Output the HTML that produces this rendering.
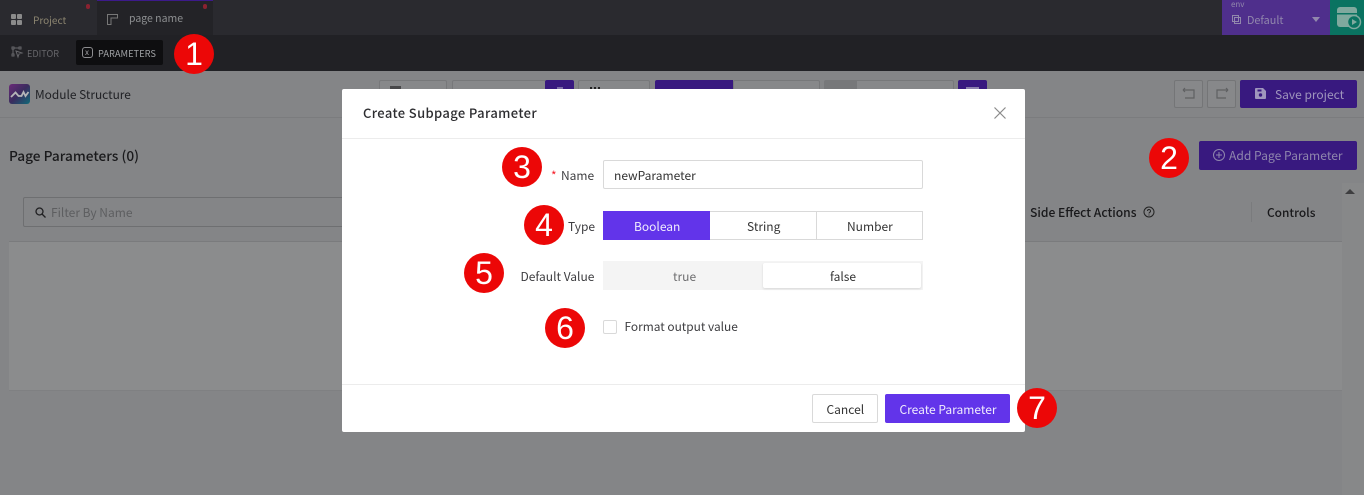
<!DOCTYPE html>
<html><head><meta charset="utf-8">
<style>
html,body{margin:0;padding:0}
body{width:1364px;height:495px;overflow:hidden;position:relative;background:#848587;font-family:"Noto Sans CJK SC","Liberation Sans",sans-serif;font-size:12px;color:#1e1e22}
.a{position:absolute;box-sizing:border-box}
.t{position:absolute;white-space:nowrap;line-height:16px}
.c{position:absolute;width:40px;height:40px;border-radius:50%;background:#ec0707;color:#fff;font:32px/40px "Liberation Sans",sans-serif;text-align:center}
.bx{position:absolute;box-sizing:border-box;border:1px solid #77787a;border-radius:2px;background:#87888a}
.p{position:absolute;background:#38197f;border-radius:2px}
svg{position:absolute;overflow:visible}
</style></head><body>
<div class="a" style="left:0;top:0;width:1364px;height:35px;background:#2a2a2f"></div>
<div class="a" style="left:97px;top:0;width:116px;height:35px;background:#232327;border-top:1px solid #3c1a8a"></div>
<div class="a" style="left:86px;top:4px;width:4px;height:5px;border-radius:2px;background:#8a2230"></div>
<div class="a" style="left:203px;top:4px;width:4px;height:5px;border-radius:2px;background:#8a2230"></div>
<svg style="left:11px;top:14px" width="11" height="11"><g fill="#8b8b8b"><rect width="5" height="5" rx="1"/><rect x="6" width="5" height="5" rx="1"/><rect y="6" width="5" height="5" rx="1"/><rect x="6" y="6" width="5" height="5" rx="1"/></g></svg>
<div class="t" style="left:33px;top:11.500px;font-size:10px;color:#8c8570">Project</div>
<svg style="left:107px;top:14px" width="12" height="11" fill="none" stroke="#777" stroke-width="1"><path d="M.5.5h10v3.5H4v6.500H.5z"/></svg>
<div class="t" style="left:129px;top:11px;font-size:10.5px;color:#8d8f91">page name</div>

<div class="a" style="left:1222px;top:0;width:108px;height:35px;background:#4f2f8c"></div>
<div class="t" style="left:1231px;top:-1px;font-size:8px;color:#9288ad;line-height:12px">env</div>
<svg style="left:1232px;top:15px" width="9" height="9" fill="none" stroke="#9288ad"><rect x=".5" y=".5" width="6" height="6"/><rect x="2.500" y="2.500" width="6" height="6"/></svg>
<div class="t" style="left:1247px;top:11.500px;font-size:10.8px;color:#9288ad">Default</div>
<div class="a" style="left:1312px;top:17px;width:0;height:0;border:4px solid transparent;border-top:5px solid #9288ad;border-bottom:0"></div>
<div class="a" style="left:1330px;top:0;width:34px;height:35px;background:#0a7361"></div>
<svg style="left:1337px;top:6px" width="24" height="23"><rect x="0" y="1" width="20" height="20" rx="3" fill="#7fa99e"/><rect x="0" y="7" width="20" height="1.500" fill="#0a7361"/><circle cx="17" cy="16" r="6.500" fill="#0a7361" stroke="#7fa99e" stroke-width="1.500"/><path d="M15 13l5 3-5 3z" fill="#7fa99e"/></svg>

<div class="a" style="left:0;top:35px;width:1364px;height:36px;background:#212125"></div>
<svg style="left:11px;top:46px" width="12" height="12" fill="none" stroke="#66666a"><path d="M1 1h2v2H1zM8 1h2v2H8zM1 8h2v2H1zM3 2h5M2 3v5M5 5l6 2-3 1-1 3z"/></svg>
<div class="t" style="left:27px;top:45px;font-size:9.100px;color:#66666a">EDITOR</div>
<div class="a" style="left:76px;top:40px;width:87px;height:25px;background:#0e0e10;border-radius:2px"></div>
<div class="a" style="left:82px;top:47px;width:11px;height:11px;border:1px solid #8d8d90;border-radius:3px"></div>
<div class="t" style="left:85px;top:44.500px;font-size:8px;color:#a0a0a3">x</div>
<div class="t" style="left:98px;top:45px;font-size:9.300px;color:#9ea0a3">PARAMETERS</div>

<div class="a" style="left:0;top:117px;width:1364px;height:1px;background:#7b7c7e"></div>
<svg style="left:9px;top:84px" width="21" height="20"><defs><linearGradient id="g" x1="0" y1="0" x2="1" y2="1"><stop offset="0" stop-color="#6b2a78"/><stop offset=".5" stop-color="#3a2c5e"/><stop offset="1" stop-color="#0f6a78"/></linearGradient></defs><rect width="21" height="20" rx="3" fill="url(#g)"/><path d="M2 13l4.500-4.500 3 3.500 3 0 2-4 2 4 3-4" fill="none" stroke="#b5b5b8" stroke-width="1.800"/></svg>
<div class="t" style="left:35px;top:87px;font-size:11.900px;color:#1f2024">Module Structure</div>

<div class="bx" style="left:379px;top:80px;width:68px;height:28px"></div>
<div class="a" style="left:390px;top:86px;width:11px;height:3px;background:#48484a"></div>
<div class="bx" style="left:452px;top:80px;width:94px;height:28px"></div>
<div class="p" style="left:545px;top:80px;width:29px;height:28px"></div>
<div class="a" style="left:557px;top:87px;width:6px;height:2px;background:#7d6ea8"></div>
<div class="bx" style="left:578px;top:80px;width:72px;height:28px"></div>
<div class="a" style="left:590px;top:87px;width:2px;height:2px;background:#222"></div>
<div class="a" style="left:594px;top:87px;width:2px;height:2px;background:#222"></div>
<div class="a" style="left:598px;top:87px;width:2px;height:2px;background:#222"></div>
<div class="p" style="left:655px;top:80px;width:78px;height:28px;border-radius:2px 0 0 2px"></div>
<div class="bx" style="left:733px;top:80px;width:87px;height:28px"></div>
<div class="bx" style="left:824px;top:80px;width:130px;height:28px"></div>
<div class="a" style="left:825px;top:81px;width:32px;height:26px;background:#77787a"></div>
<div class="p" style="left:958px;top:80px;width:29px;height:28px"></div>
<div class="a" style="left:966px;top:87px;width:13px;height:2px;background:#8b80ad"></div>

<div class="bx" style="left:1174px;top:80px;width:29px;height:28px;border-color:#747577"></div>
<svg style="left:1182px;top:88px" width="14" height="12" fill="none" stroke="#5f6062" stroke-width="1.200"><path d="M1 2h11v8H3M1 2l2-2M1 2l2 2"/></svg>
<div class="bx" style="left:1207px;top:80px;width:29px;height:28px;border-color:#747577"></div>
<svg style="left:1215px;top:88px" width="14" height="12" fill="none" stroke="#5f6062" stroke-width="1.200"><path d="M13 2H2v8h9M13 2l-2-2M13 2l-2 2"/></svg>
<div class="p" style="left:1240px;top:80px;width:117px;height:28px"></div>
<svg style="left:1255px;top:88px" width="11" height="11"><path d="M1 0h7l3 3v7a1 1 0 0 1-1 1H1a1 1 0 0 1-1-1V1a1 1 0 0 1 1-1z" fill="#9f95bd"/><circle cx="5.500" cy="7" r="1.700" fill="#38197f"/><rect x="2.500" y="1.500" width="4" height="2" fill="#38197f"/></svg>
<div class="t" style="left:1275px;top:87px;font-size:12px;color:#9f95bd">Save project</div>

<div class="t" style="left:9px;top:146.500px;font-size:13.700px;font-weight:500;color:#1a1a1c">Page Parameters (0)</div>
<div class="p" style="left:1199px;top:141px;width:158px;height:29px"></div>
<svg style="left:1213px;top:149px" width="12" height="12" fill="none" stroke="#8f86ad"><circle cx="6" cy="6" r="5.500"/><path d="M6 3v6M3 6h6"/></svg>
<div class="t" style="left:1229px;top:148px;font-size:12.100px;color:#8f86ad">Add Page Parameter</div>

<div class="a" style="left:1342px;top:183px;width:22px;height:312px;background:#878889"></div>
<div class="a" style="left:1345px;top:189px;width:0;height:0;border:5px solid transparent;border-bottom:5px solid #3e3e40;border-top:0"></div>
<div class="bx" style="left:23px;top:197px;width:325px;height:30px;border-color:#6e6f71;background:none"></div>
<svg style="left:35px;top:207px" width="11" height="11" fill="none" stroke="#202022" stroke-width="1.300"><circle cx="4.500" cy="4.500" r="3.500"/><path d="M7 7l3.500 3.500"/></svg>
<div class="t" style="left:51px;top:204.500px;font-size:12px;color:#5d5e60">Filter By Name</div>
<div class="t" style="left:1030px;top:204.500px;font-size:12.100px;font-weight:500;color:#19191b">Side Effect Actions</div>
<svg style="left:1143px;top:206px" width="12" height="12" fill="none" stroke="#222" stroke-width="1"><circle cx="6" cy="6" r="5"/><path d="M4.500 5a1.500 1.500 0 1 1 2.200 1.300c-.5.300-.7.600-.7 1.200M6 8.500v1"/></svg>
<div class="a" style="left:1251px;top:202px;width:1px;height:20px;background:#7a7b7d"></div>
<div class="t" style="left:1267px;top:204.500px;font-size:11.900px;font-weight:500;color:#19191b">Controls</div>
<div class="a" style="left:9px;top:241px;width:1333px;height:1px;background:#7a7b7d"></div>
<div class="a" style="left:9px;top:242px;width:1333px;height:149px;background:#8b8c8d"></div>
<div class="a" style="left:9px;top:390px;width:1333px;height:1px;background:#7f8082"></div>

<!-- modal -->
<div class="a" style="left:342px;top:89px;width:683px;height:343px;background:#fff;border-radius:2px"></div>
<div class="a" style="left:342px;top:138px;width:683px;height:1px;background:#ececec"></div>
<div class="t" style="left:363px;top:105px;font-size:13px;font-weight:500;letter-spacing:.37px;color:#2d2d30">Create Subpage Parameter</div>
<svg style="left:994px;top:107px" width="12" height="12" fill="none" stroke="#8a8a8a" stroke-width="1.200"><path d="M.5.500l11 11M11.500.500l-11 11"/></svg>

<div class="t" style="left:551px;top:168px;font-size:12px;color:#f5222d">*</div>
<div class="t" style="left:561px;top:168px;font-size:12px;color:#3d3d40">Name</div>
<div class="a" style="left:603px;top:160px;width:320px;height:29px;border:1px solid #d9d9d9;border-radius:2px"></div>
<div class="t" style="left:614px;top:168px;font-size:12px;color:#333">newParameter</div>

<div class="t" style="left:568px;top:219px;font-size:12px;color:#3d3d40">Type</div>
<div class="a" style="left:603px;top:211px;width:107px;height:29px;background:#6234ea"></div>
<div class="a" style="left:710px;top:211px;width:107px;height:29px;border:1px solid #d9d9d9;border-left:0"></div>
<div class="a" style="left:817px;top:211px;width:106px;height:29px;border:1px solid #d9d9d9;border-left:0"></div>
<div class="t" style="left:634px;top:219px;font-size:12px;color:#f0ecfd">Boolean</div>
<div class="t" style="left:747px;top:219px;font-size:12px;color:#333">String</div>
<div class="t" style="left:847px;top:219px;font-size:12px;color:#333">Number</div>

<div class="t" style="left:520.500px;top:269px;font-size:12px;color:#3d3d40">Default Value</div>
<div class="a" style="left:603px;top:261px;width:320px;height:29px;background:#f4f4f4"></div>
<div class="a" style="left:763px;top:263px;width:158px;height:25px;background:#fff;border-radius:2px;box-shadow:0 1px 2px rgba(0,0,0,.12)"></div>
<div class="t" style="left:673px;top:269px;font-size:12px;color:#6e6e70">true</div>
<div class="t" style="left:830px;top:269px;font-size:12px;color:#333">false</div>

<div class="a" style="left:603px;top:320px;width:14px;height:14px;border:1px solid #d9d9d9;border-radius:2px"></div>
<div class="t" style="left:624.500px;top:319px;font-size:11.900px;color:#3d3d40">Format output value</div>

<div class="a" style="left:342px;top:384px;width:683px;height:1px;background:#ececec"></div>
<div class="a" style="left:812px;top:394px;width:66px;height:29px;border:1px solid #d9d9d9;border-radius:2px"></div>
<div class="t" style="left:826.500px;top:402px;font-size:12px;color:#333">Cancel</div>
<div class="a" style="left:885px;top:394px;width:125px;height:29px;background:#6234ea;border-radius:2px"></div>
<div class="t" style="left:899.500px;top:402px;font-size:12px;color:#f0ecfd">Create Parameter</div>

<div class="c" style="left:174px;top:34px">1</div>
<div class="c" style="left:1149px;top:138px">2</div>
<div class="c" style="left:502px;top:147px">3</div>
<div class="c" style="left:524px;top:205px">4</div>
<div class="c" style="left:464px;top:253px">5</div>
<div class="c" style="left:545px;top:308px">6</div>
<div class="c" style="left:1017px;top:388px">7</div>
</body></html>
